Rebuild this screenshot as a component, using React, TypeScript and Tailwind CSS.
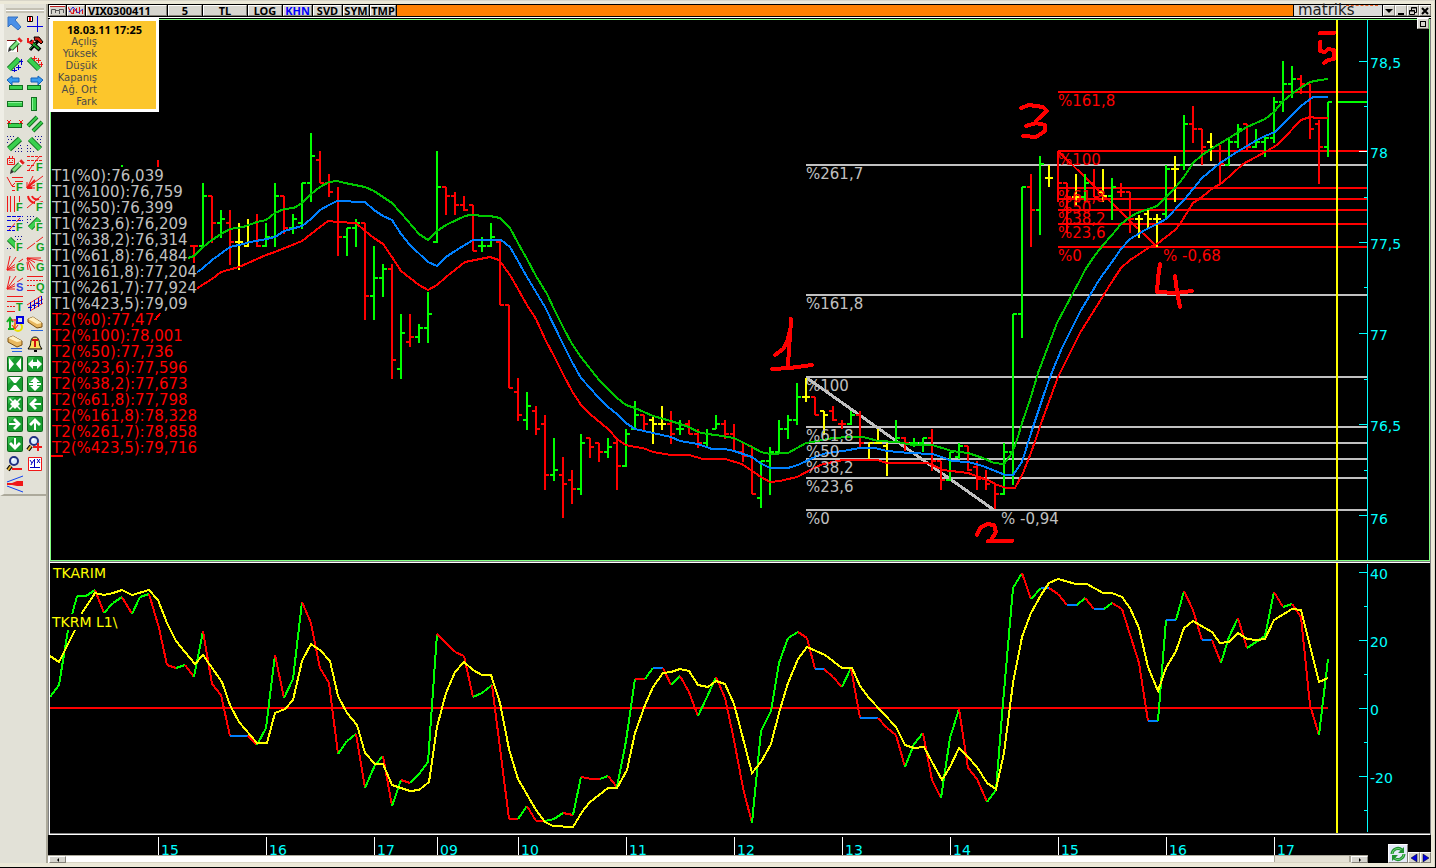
import React from "react";

type Tone = "g" | "r" | "y" | "b";
// x, high, low, open (left tick), close (right tick), tone
type Bar = [number, number, number, number | null, number | null, Tone];

const TONES: Record<Tone, string> = { g: "#00ff00", r: "#ff0000", y: "#ffff00", b: "#0080ff" };

const BARS: Bar[] = [
  [194, 246, 263, 246, 246, "r"], [203, 183, 246, 246, 196, "g"], [212, 196, 243, 196, 223, "r"],
  [221, 210, 238, 223, 219, "g"], [230, 210, 265, 223, 242, "r"], [239, 223, 270, 242, 242, "y"],
  [248, 219, 247, 246, null, "y"], [257, 214, 247, null, 246, "r"], [266, 223, 247, 246, 237, "g"],
  [275, 183, 247, 237, 196, "g"], [284, 196, 234, 196, 228, "r"], [293, 214, 234, 228, 219, "g"],
  [302, 183, 229, 223, 183, "g"], [311, 133, 202, 183, 156, "g"], [320, 151, 183, 160, 183, "r"],
  [329, 174, 197, 183, 192, "r"], [338, 187, 256, null, 237, "r"], [347, 228, 256, 237, 228, "g"],
  [356, 219, 247, 228, 223, "g"], [365, 223, 320, 223, 296, "r"], [374, 246, 320, 296, 278, "g"],
  [383, 264, 297, 278, 269, "g"], [392, 264, 379, 269, 360, "r"], [401, 314, 379, 369, 333, "g"],
  [410, 314, 347, 342, 337, "r"], [419, 324, 343, 337, 328, "g"], [428, 292, 343, 328, 314, "g"],
  [437, 151, 243, 242, 187, "g"], [446, 187, 215, 187, 196, "r"], [455, 192, 215, 196, 205, "r"],
  [464, 196, 211, 205, 210, "r"], [473, 205, 251, 205, 251, "r"], [482, 237, 252, 246, 246, "g"],
  [491, 223, 247, 246, 237, "g"], [500, 241, 305, 242, 305, "r"], [509, 305, 388, 305, 388, "r"],
  [518, 378, 421, 392, 415, "r"], [527, 392, 430, 420, 406, "g"], [536, 406, 435, 411, 429, "r"],
  [545, 415, 490, 424, 475, "r"], [554, 438, 481, 475, 470, "g"], [563, 457, 518, 475, 484, "r"],
  [572, 470, 504, 480, 489, "r"], [581, 434, 495, 489, 443, "g"], [590, 438, 458, 438, 447, "r"],
  [599, 443, 462, 443, 452, "r"], [608, 438, 458, 452, 447, "g"], [617, 440, 490, 443, 466, "r"],
  [626, 429, 467, 466, 434, "g"], [635, 401, 429, 429, 415, "g"], [644, 415, 430, 415, 424, "r"],
  [653, 416, 444, 420, 424, "y"], [662, 406, 430, 424, 424, "y"], [671, 411, 444, 424, 434, "r"],
  [680, 420, 435, 429, 429, "g"], [689, 420, 434, 424, 434, "r"], [698, 429, 448, 434, 443, "r"],
  [707, 429, 447, 443, 434, "g"], [716, 415, 429, 429, 424, "g"], [725, 420, 439, 424, 434, "r"],
  [734, 424, 452, 434, null, "r"], [743, 443, 462, 452, 456, "r"], [752, 446, 494, 446, 494, "r"],
  [761, 461, 508, 498, 461, "g"], [770, 447, 495, 461, 452, "g"], [779, 420, 454, 452, 429, "g"],
  [788, 415, 439, 429, 420, "g"], [797, 383, 425, 420, 397, "g"], [806, 378, 402, 397, 397, "y"],
  [815, 397, 415, 397, 415, "r"], [824, 411, 435, 411, 415, "y"], [833, 406, 421, 411, 420, "r"],
  [842, 420, 429, 424, 424, "r"], [851, 411, 425, 424, 415, "g"], [860, 411, 447, 415, 443, "r"],
  [869, 443, 459, null, 443, "y"], [878, 429, 443, 443, 443, "y"], [887, 443, 476, 446, null, "y"],
  [896, 420, 443, null, 438, "g"], [905, 437, 451, 438, 443, "r"], [914, 438, 447, 443, 443, "g"],
  [923, 438, 452, 443, 438, "g"], [932, 429, 471, 438, 461, "r"], [941, 461, 490, 461, 480, "r"],
  [950, 452, 481, 480, 452, "g"], [959, 443, 459, 457, 446, "g"], [968, 446, 471, 446, 470, "r"],
  [977, 461, 490, 467, 479, "r"], [986, 470, 490, 479, 484, "r"], [995, 484, 509, null, 494, "r"],
  [1004, 443, 495, 494, 452, "g"], [1013, 314, 485, 452, 314, "g"], [1022, 187, 338, 314, 187, "g"],
  [1031, 174, 247, 187, 210, "r"], [1040, 156, 235, 210, 164, "g"], [1049, 165, 187, 178, 178, "y"],
  [1058, 151, 202, null, 183, "r"], [1067, 183, 233, 183, 197, "r"], [1076, 174, 206, 197, 197, "y"],
  [1085, 174, 202, 197, 183, "g"], [1094, 169, 197, 183, 197, "r"], [1103, 169, 202, 192, 196, "y"],
  [1112, 178, 220, 196, 187, "g"], [1121, 183, 197, 192, 192, "r"], [1130, 192, 233, 192, 219, "r"],
  [1139, 215, 238, 219, 219, "y"], [1148, 209, 228, 214, 219, "y"], [1157, 214, 247, 219, 219, "y"],
  [1166, 165, 219, 214, 169, "g"], [1175, 156, 202, 169, 169, "y"], [1184, 115, 170, 165, 124, "g"],
  [1193, 106, 143, 124, 129, "r"], [1202, 129, 165, 129, 147, "r"], [1211, 133, 161, 142, 147, "y"],
  [1220, 145, 184, null, 164, "r"], [1229, 139, 165, 165, 142, "g"], [1238, 124, 148, 142, 129, "g"],
  [1247, 124, 152, 124, 147, "r"], [1256, 129, 148, 147, 142, "g"], [1265, 137, 157, 142, 138, "g"],
  [1274, 97, 143, 138, 102, "g"], [1283, 61, 112, 102, 84, "g"], [1292, 66, 98, 84, 79, "g"],
  [1301, 75, 94, 79, 84, "r"], [1310, 84, 139, 84, 129, "r"], [1319, 120, 184, 124, 147, "r"],
  [1328, 102, 157, 147, 102, "g"],
];

const UPPER =
  "188,258 194,256 203,247 212,240 221,234 230,229 243,227 257,222 266,220 275,213 284,209 294,208 302,203 311,194 320,187 329,182 337,181 345,183 365,187 374,191 392,203 401,213 419,234 428,240 437,231 446,225 465,216 470,215 477,215 480,216 490,216 500,218 510,228 518,243 527,259 536,276 547,294 554,309 563,327 572,344 581,357 599,380 617,398 626,405 635,408 653,416 671,421 689,427 698,432 707,434 716,435 734,438 752,447 761,452 770,454 788,453 806,443 823,440 833,438 850,437 863,437 878,441 897,442 913,445 932,445 942,448 952,451 968,453 983,458 994,463 1004,464 1012,453 1017,440 1022,423 1030,400 1038,373 1057,323 1080,280 1085,270 1093,258 1103,245 1112,235 1121,224 1130,217 1137,213 1157,206 1166,197 1175,188 1184,177 1193,163 1202,155 1211,149 1229,138 1247,127 1265,119 1274,112 1283,101 1297,90 1310,82 1320,80 1328,79";
const MIDDLE =
  "196,273 203,268 212,260 230,247 243,244 250,242 267,239 275,237 284,231 302,226 311,219 320,210 329,205 337,201 365,202 374,210 383,216 392,220 401,234 410,245 428,262 437,266 446,257 455,251 473,240 501,240 510,247 518,261 527,277 536,292 545,307 563,344 572,362 581,378 590,388 599,398 608,407 617,414 626,423 635,429 653,433 671,437 680,441 698,444 712,449 725,449 734,451 752,457 760,463 770,468 788,468 798,465 817,456 827,453 843,451 860,448 875,448 887,451 910,453 932,454 942,457 952,461 968,462 983,466 1005,475 1013,475 1022,462 1032,430 1043,397 1050,377 1062,348 1080,312 1099,280 1112,262 1121,249 1130,239 1145,230 1157,224 1166,219 1184,200 1202,178 1220,163 1237,152 1247,146 1257,140 1265,136 1275,132 1283,124 1301,106 1313,97 1328,97";
const LOWER =
  "196,289 212,279 221,272 239,267 257,259 266,255 275,252 302,241 311,234 320,227 328,221 337,222 356,223 365,231 374,238 383,244 392,257 401,271 419,285 428,290 437,285 446,277 465,262 480,259 490,257 499,260 510,275 518,289 527,305 536,319 545,339 554,356 563,374 572,391 581,405 590,414 608,429 618,440 626,445 635,447 643,448 653,452 671,455 689,455 703,459 725,459 742,464 761,477 770,482 780,481 797,477 812,469 823,464 843,460 877,460 887,463 928,463 943,470 968,473 988,480 997,485 1007,488 1015,488 1023,473 1032,450 1043,418 1058,377 1080,333 1113,280 1121,268 1130,260 1150,247 1157,244 1175,230 1180,224 1193,203 1202,197 1213,188 1222,183 1243,164 1267,151 1277,145 1283,139 1301,120 1310,117 1317,118 1328,118";

const OSC =
  "50,697;59,685g;68,630g;77,596g;86,596g;95,590g;104,613r;113,603g;122,597g;132,614r;140,597g;149,594g;159,628r;167,665r;176,668r;185,665g;194,677r;203,631g;212,684r;221,695r;230,736r;248,736b;257,745r;266,728g;275,655g;284,698r;293,679g;302,602g;311,623r;320,668r;329,683r;338,754r;347,741g;356,734g;365,788r;375,765g;383,756g;392,806r;401,780g;410,783r;419,774g;428,762g;437,634g;455,652r;464,656r;473,697r;482,693g;492,685g;509,819r;518,819r;527,806g;536,821r;545,821r;554,819g;563,813g;573,815r;581,777g;592,779r;600,779r;608,776g;617,787r;626,741g;635,679g;645,679r;653,668g;663,668b;671,685r;680,676g;689,692r;698,716r;707,697g;716,677g;725,698r;734,740r;743,788r;752,823r;761,731g;771,711g;779,663g;788,638g;798,632g;807,638r;815,669r;824,669b;833,677r;842,687r;851,668g;860,718r;878,718b;887,728r;896,735r;905,767r;914,744g;923,733g;932,780r;941,798r;950,738g;959,709g;968,768r;977,779r;987,802r;996,790g;1003,703g;1013,588g;1022,573g;1031,599r;1041,588g;1049,588b;1058,594r;1067,605r;1077,605b;1085,598g;1094,609r;1104,609b;1112,603g;1122,609r;1139,663r;1148,721r;1158,721b;1166,620g;1176,620b;1184,591g;1193,610r;1202,640r;1212,640b;1221,663r;1229,637g;1238,618g;1247,648r;1265,636g;1274,592g;1283,607r;1292,604g;1301,617r;1310,705r;1319,735r;1328,659g";
const SIGNAL =
  "50,656 59,662 75,630 82,613 95,593 104,595 113,593 122,590 132,595 149,590 158,600 167,623 176,641 185,652 195,664 203,655 222,682 230,705 239,722 257,743 267,743 275,713 285,709 293,700 302,661 311,644 321,651 330,661 338,696 347,713 357,725 365,753 375,764 383,764 392,785 410,791 419,790 429,782 437,727 446,693 455,672 464,662 473,670 482,675 491,675 500,703 509,749 518,779 536,810 545,822 553,826 573,827 582,812 590,802 608,788 617,788 627,770 635,733 645,705 653,687 663,673 671,672 680,669 689,671 698,685 708,687 716,681 725,684 734,704 752,773 761,762 771,744 779,713 788,683 798,659 807,647 825,655 842,668 852,668 860,686 869,698 896,727 905,745 914,748 924,747 932,762 942,780 950,767 959,748 968,757 977,767 987,783 996,789 1004,753 1013,683 1022,637 1031,613 1041,595 1049,583 1058,579 1076,584 1087,584 1103,593 1112,593 1122,597 1130,608 1139,628 1148,667 1158,691 1166,668 1176,651 1184,628 1193,621 1212,632 1220,643 1229,642 1238,633 1247,639 1257,640 1265,639 1274,620 1292,609 1301,610 1319,682 1328,678";

const SEGMENTS = OSC.split(";").map((s) => {
  const m = /^(\d+),(\d+)([grb]?)$/.exec(s)!;
  return { x: +m[1], y: +m[2], tone: (m[3] || "g") as Tone };
});

const T1: [string, string][] = [
  ["0", "76,039"], ["100", "76,759"], ["50", "76,399"], ["23,6", "76,209"], ["38,2", "76,314"],
  ["61,8", "76,484"], ["161,8", "77,204"], ["261,7", "77,924"], ["423,5", "79,09"],
];
const T2: [string, string][] = [
  ["0", "77,47"], ["100", "78,001"], ["50", "77,736"], ["23,6", "77,596"], ["38,2", "77,673"],
  ["61,8", "77,798"], ["161,8", "78,328"], ["261,7", "78,858"], ["423,5", "79,716"],
];

const FIB1: [number, string][] = [
  [165, "%261,7"], [295, "%161,8"], [377, "%100"], [427, "%61,8"], [443, "%50"], [459, "%38,2"], [478, "%23,6"], [510, "%0"],
];
const FIB2: [number, string][] = [
  [92, "%161,8"], [151, "%100"], [188, "%61,8"], [199, "%50"], [210, "%38,2"], [224, "%23,6"], [247, "%0"],
];

const wide = "font-['DejaVu_Sans',Verdana,sans-serif]";

function barPath(tone: Tone) {
  return BARS.filter((b) => b[5] === tone)
    .map(([x, hi, lo, o, c]) => `M${x} ${hi}V${lo}${o === null ? "" : `M${x - 4} ${o}H${x}`}${c === null ? "" : `M${x} ${c}H${x + 4}`}`)
    .join("");
}

function PriceChart() {
  return (
    <svg viewBox="51 20 1378 540" className={`block w-full ${wide}`} shapeRendering="crispEdges" fill="none" role="img" aria-label="VIX0300411">
      <g stroke="#c0c0c0" strokeWidth="2">
        {FIB1.map(([y]) => <path key={y} d={`M806 ${y}H1367`} />)}
        <path d="M807 378L994 510" strokeWidth="3" />
      </g>
      <g stroke="#ff0000" strokeWidth="2">
        {FIB2.map(([y]) => <path key={y} d={`M1058 ${y}H1367`} />)}
        <path d="M1058 151L1157 247" />
      </g>
      <g strokeWidth="2">
        {(["r", "g", "y"] as Tone[]).map((t) => <path key={t} d={barPath(t)} stroke={TONES[t]} />)}
        <polyline points={LOWER} stroke="#ff0000" />
        <polyline points={MIDDLE} stroke="#0080ff" />
        <polyline points={UPPER} stroke="#00c800" />
        <path d="M1336 102H1367" stroke="#00ff00" />
        <path d="M158 160V167M155 320L161 312M51 456H63" stroke="#ff0000" />
        <path d="M121 166H123" stroke="#00ff00" />
      </g>
      <g fontSize="15" fill="#c0c0c0">
        {FIB1.map(([y, t]) => <text key={t} x="806" y={y + 14}>{t}</text>)}
        <text x="1001" y="524">% -0,94</text>
      </g>
      <g fontSize="15" fill="#ff0000">
        {FIB2.map(([y, t]) => <text key={t} x="1058" y={y + 14}>{t}</text>)}
        <text x="1163" y="261">% -0,68</text>
      </g>
      <path d="M1337 20V560" stroke="#ffff00" strokeWidth="2" />
      <g stroke="#ff0000" strokeWidth="4" strokeLinecap="round" strokeLinejoin="round">
        <path d="M791 319L790 337L789 347L788 367M775 355L783 349L787 342L790 330M772 369L790 368L812 365" />
        <path d="M977 535L980 528L987 524L994 525L996 532L991 540M988 541L1012 541" />
        <path d="M1021 108L1029 105L1043 107L1047 111L1036 121M1026 126L1036 123L1045 125L1045 131L1036 137L1023 136" />
        <path d="M1160 264L1158 278L1157 292L1176 293L1192 291M1175 276L1177 292L1180 307" />
        <path d="M1320 33H1334M1320 42L1320 51L1325 52L1328 49L1334 50L1334 59L1328 60L1324 63" />
      </g>
      <g stroke="#00ffff">
        <path d="M1367.500 20V560" />
        <path d="M1359 61.500H1367M1359 242.500H1367M1359 333.500H1367M1359 424.500H1367M1359 515.500H1367" />
        <path d="M1364 106.500H1367M1364 197.500H1367M1364 287.500H1367M1364 379.500H1367M1364 470.500H1367" />
        <path d="M1359 151.500H1367" stroke="#ffffff" />
      </g>
      <g fontSize="14" fill="#00ffff">
        <text x="1370" y="68">78,5</text>
        <text x="1370" y="158">78</text>
        <text x="1370" y="249">77,5</text>
        <text x="1370" y="340">77</text>
        <text x="1370" y="431">76,5</text>
        <text x="1370" y="524">76</text>
      </g>
    </svg>
  );
}

function Oscillator() {
  return (
    <svg viewBox="50 563 1380 270" className={`block w-full ${wide}`} shapeRendering="crispEdges" fill="none" role="img" aria-label="TKARIM">
      <path d="M50 708H1328" stroke="#ff0000" strokeWidth="2" />
      <g strokeWidth="2">
        {SEGMENTS.slice(1).map((p, i) => (
          <path key={i} d={`M${SEGMENTS[i].x} ${SEGMENTS[i].y}L${p.x} ${p.y}`} stroke={TONES[p.tone]} />
        ))}
        <polyline points={SIGNAL} stroke="#ffff00" />
        <path d="M1337 563V833" stroke="#ffff00" />
      </g>
      <path d="M51 614H112V630H51Z" fill="#000000" />
      <g fontSize="14" fill="#ffff00">
        <text x="53" y="578">TKARIM</text>
        <text x="52" y="627">TKRM L1\</text>
      </g>
      <g stroke="#00ffff">
        <path d="M1367.500 564V832" />
        <path d="M1359 572.500H1367M1359 640.500H1367M1359 708.500H1367M1359 776.500H1367" />
        <path d="M1364 606.500H1367M1364 674.500H1367M1364 742.500H1367M1364 810.500H1367" />
      </g>
      <g fontSize="14" fill="#00ffff">
        <text x="1370" y="579">40</text>
        <text x="1370" y="647">20</text>
        <text x="1370" y="715">0</text>
        <text x="1370" y="783">-20</text>
      </g>
    </svg>
  );
}

const DAYS: [number, string][] = [
  [158, "15"], [266, "16"], [374, "17"], [437, "09"], [518, "10"], [626, "11"],
  [734, "12"], [842, "13"], [950, "14"], [1058, "15"], [1166, "16"], [1274, "17"],
];

function TimeAxis() {
  return (
    <svg viewBox="48 835 1320 20" className={`block w-full overflow-visible ${wide}`} shapeRendering="crispEdges">
      {DAYS.map(([x, d]) => (
        <g key={x}>
          <path d={`M${x} 837h1v18h-1z`} fill="#ffffff" />
          <text x={x + 3} y="855" fontSize="14" fill="#00ffff">{d}</text>
        </g>
      ))}
    </svg>
  );
}

/* ---------- toolbar icons, drawn on a 16 x 16 grid ---------- */

const Stick = ({ d }: { d: string }) => (
  <>
    <path d={d} stroke="#12701f" strokeWidth="6" />
    <path d={d} stroke="#3ad04e" strokeWidth="4" />
  </>
);
const Letter = ({ c, color }: { c: string; color: string }) => (
  <>
    <path d="M8 6h8v10H8z" fill="#e2e1d7" />
    <text x="9" y="15" fontSize="11" fontWeight="bold" fill={color} className="font-['Liberation_Sans',Arial,sans-serif]">{c}</text>
  </>
);
const Pencil = () => (
  <>
    <path d="M4 13L12 5" stroke="#1c6b26" strokeWidth="5" />
    <path d="M4 13L12 5" stroke="#7ce47f" strokeWidth="3" />
    <path d="M11 6L13 4" stroke="#fff" strokeWidth="5" />
    <path d="M12 5L14 3" stroke="#e02020" strokeWidth="5" />
    <path d="M1 16L2 11L5 14Z" fill="#333" />
  </>
);
const Tile = ({ d }: { d: string }) => (
  <>
    <rect width="16" height="16" rx="2" fill="#0d6b1b" />
    <rect x="1" y="1" width="14" height="14" rx="1" fill="#189c30" />
    <path d="M1 8L8 1H1Z" fill="#35bd4c" />
    <path d={d} fill="#fff" />
  </>
);
const Dots = ({ d }: { d: string }) => <path d={d} stroke="#101090" strokeWidth="1" strokeDasharray="1 2" shapeRendering="crispEdges" />;
const Lens = () => (
  <>
    <path d="M4 10L1 14" stroke="#000" strokeWidth="4" />
    <path d="M4 10L1 14" stroke="#e0b030" strokeWidth="2" />
    <circle cx="7" cy="5" r="4" fill="#d8ecff" stroke="#203080" strokeWidth="2" />
    <path d="M5 4L7 3" stroke="#fff" strokeWidth="2" />
  </>
);
const red = "#f01818";

const ICONS: [string, React.ReactNode][] = [
  ["Seç", <path d="M1 1H11L8 4L14 11L11 14L4 8L1 11Z" fill="#4a90e8" stroke="#3470c0" />],
  ["İmleç", <><path d="M10.500 0V16M0 10.500H16" stroke="#0000e0" /><path d="M.5 .5H5.500V5.500H.5Z" fill="#fff" stroke="#000" /><path d="M3 1V5" stroke="#f00" strokeWidth="2" /></>],
  ["Düzenle", <><path d="M0 4.500H10.500V16H0Z" fill="#fff" /><path d="M0 4.500H10.500V16" stroke="#801010" /><Pencil /></>],
  ["Ayarlar", <><path d="M3 14L12 4" stroke="#000" strokeWidth="3" /><path d="M3 5L13 14" stroke="#000" strokeWidth="4" /><path d="M4 6L12 13" stroke="#18a028" strokeWidth="2" /><path d="M3 13L9 7" stroke="#18a028" /><path d="M7 1L12 1L16 6L14 8L10 4L8 5Z" fill="#d02010" stroke="#000" /><path d="M1 2V6L5 7L6 4" stroke={red} strokeWidth="2" /></>],
  ["Trend yukarı", <><Stick d="M2 13L12 3" /><path d="M7.500 12V16M5 14.500H10M11.500 9V14M9 11.500H14M14.500 3V9M12 5.500H16" stroke="#0000d0" /></>],
  ["Trend aşağı", <><Stick d="M2 3L12 13" /><path d="M7.500 0V5M5 2.500H10M11.500 2V7M9 4.500H14M14.500 6V11M12 8.500H16" stroke={red} /></>],
  ["Sola uzat", <><path d="M0 4L5 0V2H12V6H5V9Z" fill="#3a9cf0" stroke="#1560b8" /><path d="M2 9H16V14H2Z" fill="#12701f" /><path d="M3 10H15V13H3Z" fill="#3ad04e" /></>],
  ["Sağa uzat", <><path d="M16 4L11 0V2H4V6H11V9Z" fill="#3a9cf0" stroke="#1560b8" /><path d="M0 9H14V14H0Z" fill="#12701f" /><path d="M1 10H13V13H1Z" fill="#3ad04e" /></>],
  ["Yatay çizgi", <><path d="M0 5H16V11H0Z" fill="#12701f" /><path d="M1 6H15V10H1Z" fill="#3ad04e" /><path d="M1 6H15V7H1Z" fill="#8cf59a" /></>],
  ["Dikey çizgi", <><path d="M4 1H10V15H4Z" fill="#12701f" /><path d="M5 2H9V14H5Z" fill="#3ad04e" /><path d="M5 2H6V14H5Z" fill="#8cf59a" /></>],
  ["Parça", <><path d="M1 7H15V12H1Z" fill="#12701f" /><path d="M2 8H14V11H2Z" fill="#3ad04e" /><path d="M0 4L4 8M4 4L0 8M12 4L16 8M16 4L12 8" stroke={red} /></>],
  ["Kanal", <><path d="M1 10L10 1M6 15L15 6" stroke="#12701f" strokeWidth="4" /><path d="M1 10L10 1M6 15L15 6" stroke="#3ad04e" strokeWidth="2" /></>],
  ["Bant yukarı", <><Dots d="M0 .5H8M1 3.500H6M0 6.500H3M13 9.500H16M11 12.500H16M8 15.500H16" /><Stick d="M2 13L13 3" /></>],
  ["Bant aşağı", <><Dots d="M8 .5H16M10 3.500H16M13 6.500H16M0 9.500H3M0 12.500H5M0 15.500H8" /><Stick d="M3 3L13 13" /></>],
  ["Not", <><path d="M.5 2.500H7.500V8.500H.5ZM2.500 0V2M5.500 0V2M2.500 4V5M5.500 4V5M2 6.500H6" stroke={red} /><g transform="translate(2 2)"><Pencil /></g></>],
  ["Fibonacci", <><path d="M0 .5H16M0 4.500H16M0 9.500H9M0 14.500H8" stroke={red} strokeDasharray="3 1" /><path d="M2 14L12 1" stroke={red} /><Letter c="F" color="#10a020" /></>],
  ["Fibonacci uzatma", <><path d="M5 1.500H16M8 5.500H16M5 10.500H9M5 14.500H9M0 1L5 10L10 5" stroke={red} /><Letter c="F" color="#10a020" /></>],
  ["Fibonacci yelpaze", <><path d="M0 12L16 0M0 12L16 6M0 12L6 0M0 12H9M0 12V6" stroke={red} strokeWidth="1" /><path d="M0 12L8 4M0 12H5" stroke={red} strokeWidth="2" /><Letter c="F" color="#10a020" /></>],
  ["Fibonacci zaman", <><path d="M.5 0V16M3.500 0V16M7.500 0V16M12.500 0V7" stroke={red} /><Letter c="F" color="#10a020" /></>],
  ["Fibonacci yay", <><path d="M1 0C2 6 8 9 16 6M5 0C6 3 9 4 12 3" stroke={red} strokeWidth="2" /><path d="M14 0L0 12" stroke={red} /><Letter c="F" color="#10a020" /></>],
  ["Seviyeler", <><path d="M0 .5H16M0 4.500H16M0 10.500H9M0 14.500H8" stroke="#0000e0" strokeDasharray="4 1" /><path d="M2 14L13 2" stroke={red} /><Letter c="F" color="#10a020" /></>],
  ["Kanal F", <><Dots d="M0 .5H8M0 3.500H5M0 6.500H3" /><Stick d="M3 12L12 3" /><Letter c="F" color="#10a020" /></>],
  ["Kanal F aşağı", <><Dots d="M8 .5H16M10 3.500H16M0 12.500H6" /><Stick d="M2 3L10 11" /><Letter c="F" color="#10a020" /></>],
  ["Gann çizgisi", <><path d="M0 13L16 1" stroke={red} /><Letter c="G" color="#10a020" /></>],
  ["Gann yelpaze", <><path d="M0 14L3 0M0 14L9 1M0 14L16 3M0 14L16 8M0 14H9" stroke={red} /><Letter c="G" color="#10a020" /></>],
  ["Gann ızgara", <><path d="M0 2L16 5M0 2L14 10M0 2L9 14M0 2L4 15M0 2H14M0 6L1 14" stroke={red} /><Letter c="G" color="#10a020" /></>],
  ["Hız çizgisi", <><path d="M0 13L3 0M0 13L9 0M0 13L16 2M0 13L16 7M0 13H9" stroke={red} /><Letter c="S" color="#3040e0" /></>],
  ["Çeyrekler", <><path d="M0 .5H16M0 14.500H9" stroke={red} /><path d="M0 4.500H16M0 9.500H9" stroke={red} strokeDasharray="2 1" /><Letter c="Q" color="#10a020" /></>],
  ["Üçte bir", <><path d="M0 .5H16M0 5.500H16M0 15.500H9" stroke={red} /><path d="M0 10.500H9" stroke={red} strokeDasharray="2 1" /><Letter c="T" color="#10a020" /></>],
  ["Regresyon", <><path d="M0 9L14 0M1 12L16 3M3 15L16 7" stroke={red} /><path d="M3.500 6V15M7.500 4V13M11.500 2V11M14.500 0V8M1 11.500H5M5 9.500H9M9 7.500H13" stroke="#0000d0" /></>],
  ["Şekiller", <><circle cx="11" cy="11" r="4" stroke="#e8e000" strokeWidth="2" /><path d="M10 1H16V7H10Z" stroke="#0000e0" strokeWidth="2" /><path d="M3 14V3M0 6L3 2L6 6M1 13H7" stroke="#10b020" strokeWidth="2" /><path d="M8 3V12M5 9L8 13L11 9M4 4H10" stroke={red} /></>],
  ["Sil", <><path d="M1 3L6 1L15 7V11L10 12L1 6Z" fill="#e8b860" stroke="#7a5010" /><path d="M1 3L6 1L15 7L10 8Z" fill="#fff0c0" /><path d="M4 14.500H16" stroke="#2060e0" strokeWidth="1" /></>],
  ["Hepsini sil", <><path d="M1 2L6 0L15 5V9L10 11L1 6Z" fill="#e8b860" stroke="#7a5010" /><path d="M1 2L6 0L15 5L10 6Z" fill="#fff0c0" /><path d="M4 12.500H15M5 15.500H15" stroke="#2060e0" /></>],
  ["Alarm", <><path d="M8 1C3 1 4 8 3 10L1 13H15L13 10C12 8 13 1 8 1Z" fill="#f8e060" stroke="#000" /><path d="M5 4H11M8 4V11" stroke="#d01010" strokeWidth="2" /><path d="M7 14H10V16H7Z" fill="#000" /></>],
  ["Yatay daralt", <Tile d="M2 2L7 8L2 14ZM14 2L9 8L14 14Z" />],
  ["Yatay genişlet", <Tile d="M1 8L6 3V6H10V3L15 8L10 13V10H6V13Z" />],
  ["Dikey daralt", <Tile d="M2 1H14L9 7H7ZM2 15H14L9 9H7Z" />],
  ["Dikey genişlet", <Tile d="M8 1L13 6H10V7H14V9H10V10H13L8 15L3 10H6V9H2V7H6V6H3Z" />],
  ["Sığdır", <Tile d="M3 2L6 5L8 3L10 5L13 2L14 3L11 6L13 8L11 10L14 13L13 14L10 11L8 13L6 11L3 14L2 13L5 10L3 8L5 6L2 3Z" />],
  ["Sol", <Tile d="M2 8L8 2L10 4L7 7H14V9H7L10 12L8 14Z" />],
  ["Sağ", <Tile d="M14 8L8 2L6 4L9 7H2V9H9L6 12L8 14Z" />],
  ["Yukarı", <Tile d="M8 2L14 8L12 10L9 7V14H7V7L4 10L2 8Z" />],
  ["Aşağı", <Tile d="M8 14L14 8L12 6L9 9V2H7V9L4 6L2 8Z" />],
  ["Yakınlaş", <><Lens /><path d="M6 11H15M11 7V15" stroke={red} strokeWidth="2" /></>],
  ["Uzaklaş", <><Lens /><path d="M5 13H15" stroke={red} strokeWidth="2" /></>],
  ["Eksenler", <><path d="M1.500 1.500H14.500V14.500H1.500Z" stroke={red} fill="#fff" /><path d="M7.500 3V12M3 11.500H13M3 4L5 7L7 4M5 7L4 9M10 3L13 7M13 3L10 7" stroke="#0000c0" /></>],
  ["Yelpaze", <><path d="M0 7H5L10 5H16V10H10L5 9H0Z" fill={red} /><path d="M0 6L16 0M0 10L16 16" stroke="#1040f0" /></>],
];

function Toolbar() {
  return (
    <nav aria-label="Çizim araçları" className="flex w-12 shrink-0 flex-col border-r-2 border-[#aca99b] bg-[#e2e1d7]">
      <div className="flex flex-col border-l-4 border-b-2 border-l-[#efeee6] border-b-[#aca99b] px-px pt-1">
        <div className="mx-px mb-px h-[5px] border-y-2 border-[#c4c1b4] bg-white" />
        <div className="grid grid-cols-2">
          {ICONS.map(([label, art]) => (
            <button key={label} type="button" aria-label={label} className="flex h-5 w-5 items-center justify-center">
              <svg viewBox="0 0 16 16" className="h-4 w-4 overflow-visible" fill="none">{art}</svg>
            </button>
          ))}
        </div>
      </div>
    </nav>
  );
}

/* ---------- title bar ---------- */

const bevel = "border border-t-white border-l-white border-r-[#86837a] border-b-[#86837a] bg-[#d6d5ce]";
const cell = `flex items-center justify-center ${bevel}`;

function TitleBar() {
  return (
    <header className="flex h-[13px] gap-px border-y border-l border-black bg-black font-['Noto_Sans',Tahoma,sans-serif] text-[11px] leading-3 font-bold text-black">
      <button type="button" aria-label="Pencere" className={`w-[17px] ${cell}`}>
        <svg viewBox="0 0 15 9" className="h-[9px] w-[15px]" fill="none"><path d="M0 .5H15" stroke="#c02020" /><path d="M1.500 8V3.500H5.500V7M5 4.500H9.500V8M9 3.500H13.500V7" stroke="#555" /></svg>
      </button>
      <button type="button" aria-label="Grafik" className={`w-[18px] ${cell}`}>
        <svg viewBox="0 0 16 9" className="h-[9px] w-4" fill="none"><path d="M0 1L4 8L8 3M5.500 3V8M8.500 2V7M11.500 1V8M14.500 4V8" stroke="#e01010" /><path d="M1 6L5 1L10 7L15 3" stroke="#2020d0" /></svg>
      </button>
      <button type="button" className={`w-[81px] ${cell} justify-start! pl-px`}>VIX0300411</button>
      <button type="button" className={`w-[34px] ${cell}`}>5</button>
      <button type="button" className={`w-11 ${cell}`}>TL</button>
      <button type="button" className={`w-[34px] ${cell}`}>LOG</button>
      <button type="button" className={`w-[29px] ${cell} text-[#0000ff]`}>KHN</button>
      <button type="button" className={`w-[29px] ${cell}`}>SVD</button>
      <button type="button" className={`w-[26px] ${cell}`}>SYM</button>
      <button type="button" className={`w-[26px] ${cell}`}>TMP</button>
      <div className="flex-1 bg-[#ff8000]" />
      <div className="relative flex w-[88px] items-center bg-[#dcdcda] pl-1 font-['DejaVu_Sans',Verdana,sans-serif] text-[15px] leading-[11px] font-normal text-[#222]">
        matriks
        <span className="absolute top-0 right-1 w-8 border-t border-dashed border-[#f06020]" />
      </div>
      <div className="flex">
        <button type="button" aria-label="Menü" className={`w-3 ${cell}`}><svg viewBox="0 0 8 8" className="h-2 w-2 shrink-0"><path d="M0 2H8L4 6Z" /></svg></button>
        <button type="button" aria-label="Küçült" className={`w-3 ${cell}`}><svg viewBox="0 0 8 8" className="h-2 w-2 shrink-0"><path d="M1 6H7V8H1Z" /></svg></button>
        <button type="button" aria-label="Geri yükle" className={`w-3 ${cell}`}><svg viewBox="0 0 8 8" className="h-2 w-2 shrink-0" fill="none" stroke="#000"><path d="M2.500 3V.5H7.500V5.500H5.500M.5 3.500H5.500V7.500H.5ZM2 1H8M0 4H6" /></svg></button>
        <button type="button" aria-label="Kapat" className={`w-3 ${cell}`}><svg viewBox="0 0 8 8" className="h-2 w-2 shrink-0" stroke="#000" strokeWidth="2"><path d="M1 1L7 7M7 1L1 7" /></svg></button>
      </div>
    </header>
  );
}

function Levels() {
  return (
    <ul className={`absolute top-[148px] left-px text-[15px] leading-4 ${wide}`}>
      {T1.map(([l, v]) => (
        <li key={l} className="text-[#c0c0c0]"><span className="bg-black">{`T1(%${l}):${v}`}</span></li>
      ))}
      {T2.map(([l, v]) => (
        <li key={l} className="text-[#ff0000]">{`T2(%${l}):${v}`}</li>
      ))}
    </ul>
  );
}

function QuoteBox() {
  return (
    <section className={`absolute -top-0.5 -left-px w-[109px] border-[3px] border-white bg-[#fcc62c] pt-[3px] pb-px text-[10px] leading-3 text-[#4a4a4a] ${wide}`}>
      <h2 className="text-center font-['Noto_Sans',Tahoma,sans-serif] text-[11px] leading-3 font-bold text-black">18.03.11 17:25</h2>
      <ul className="w-[44px] text-right">
        {["Açılış", "Yüksek", "Düşük", "Kapanış", "Ağ. Ort", "Fark"].map((t) => <li key={t} className="whitespace-nowrap">{t}</li>)}
      </ul>
    </section>
  );
}

function BottomBar() {
  return (
    <footer className="flex bg-black">
      <div className="min-w-0 flex-1">
        <TimeAxis />
        <div className="flex h-2 border-t border-[#aca99b] bg-white pl-px">
          <button type="button" aria-label="Sola kaydır" className={`w-[17px] ${cell}`}><svg viewBox="0 0 4 4" className="h-1 w-1"><path d="M3 0V4L1 2Z" /></svg></button>
          <div className="flex flex-1 justify-end border-b border-[#d8d4c4]"><div className="w-[6%] border-r-2 border-l border-[#aca99b] bg-[#e4e1d4]" /></div>
          <button type="button" aria-label="Sağa kaydır" className={`w-[17px] ${cell}`}><svg viewBox="0 0 4 4" className="h-1 w-1"><path d="M1 0V4L3 2Z" /></svg></button>
        </div>
      </div>
      <div className="flex w-[63px] items-end justify-end">
        <button type="button" aria-label="Yenile" className={`h-[19px] w-5 ${cell} bg-[#e4e8f8]`}>
          <svg viewBox="0 0 16 16" className="h-4 w-4" fill="none"><path d="M2 8A6 6 0 0 1 12 4M14 8A6 6 0 0 1 4 12" stroke="#209030" strokeWidth="3" /><path d="M2 8A6 6 0 0 1 12 4M14 8A6 6 0 0 1 4 12" stroke="#70d878" /><path d="M14 1V7H8ZM2 15V9H8Z" fill="#209030" /></svg>
        </button>
        <button type="button" aria-label="Önceki" className={`h-[11px] w-3 ${cell}`}><svg viewBox="0 0 8 8" className="h-2 w-2"><path d="M7 0V8L1 4Z" fill="#0000e0" stroke="#000" strokeWidth=".5" /></svg></button>
        <button type="button" aria-label="Sonraki" className={`h-[11px] w-[11px] ${cell}`}><svg viewBox="0 0 8 8" className="h-2 w-2"><path d="M1 0V8L7 4Z" fill="#0000e0" stroke="#000" strokeWidth=".5" /></svg></button>
      </div>
    </footer>
  );
}

export default function App() {
  return (
    <div className="min-h-screen border-r border-b border-black bg-[#ece9d8]">
      <div className="flex border-t border-r border-[#d8d5c8] pt-[3px] pr-[3px] pb-1">
        <Toolbar />
        <main className="min-w-0 flex-1">
          <TitleBar />
          <div className="h-0.5 border-t border-white bg-black" />
          <div className="border-x border-[#808080]">
            <div className="border-l border-white">
              <div className="relative border border-[#80ff80] bg-black">
                <PriceChart />
                <Levels />
                <QuoteBox />
                <button type="button" aria-label="Paneli büyüt" className={`absolute -top-0.5 right-0 h-[11px] w-3 ${cell}`}>
                  <span className="h-1.5 w-1.5 border border-black" />
                </button>
              </div>
              <div className="h-0.5 border-b border-white bg-[#808080]" />
              <div className="bg-black"><Oscillator /></div>
              <div className="h-0.5 border-b border-white bg-[#808080]" />
            </div>
          </div>
          <BottomBar />
        </main>
      </div>
    </div>
  );
}
